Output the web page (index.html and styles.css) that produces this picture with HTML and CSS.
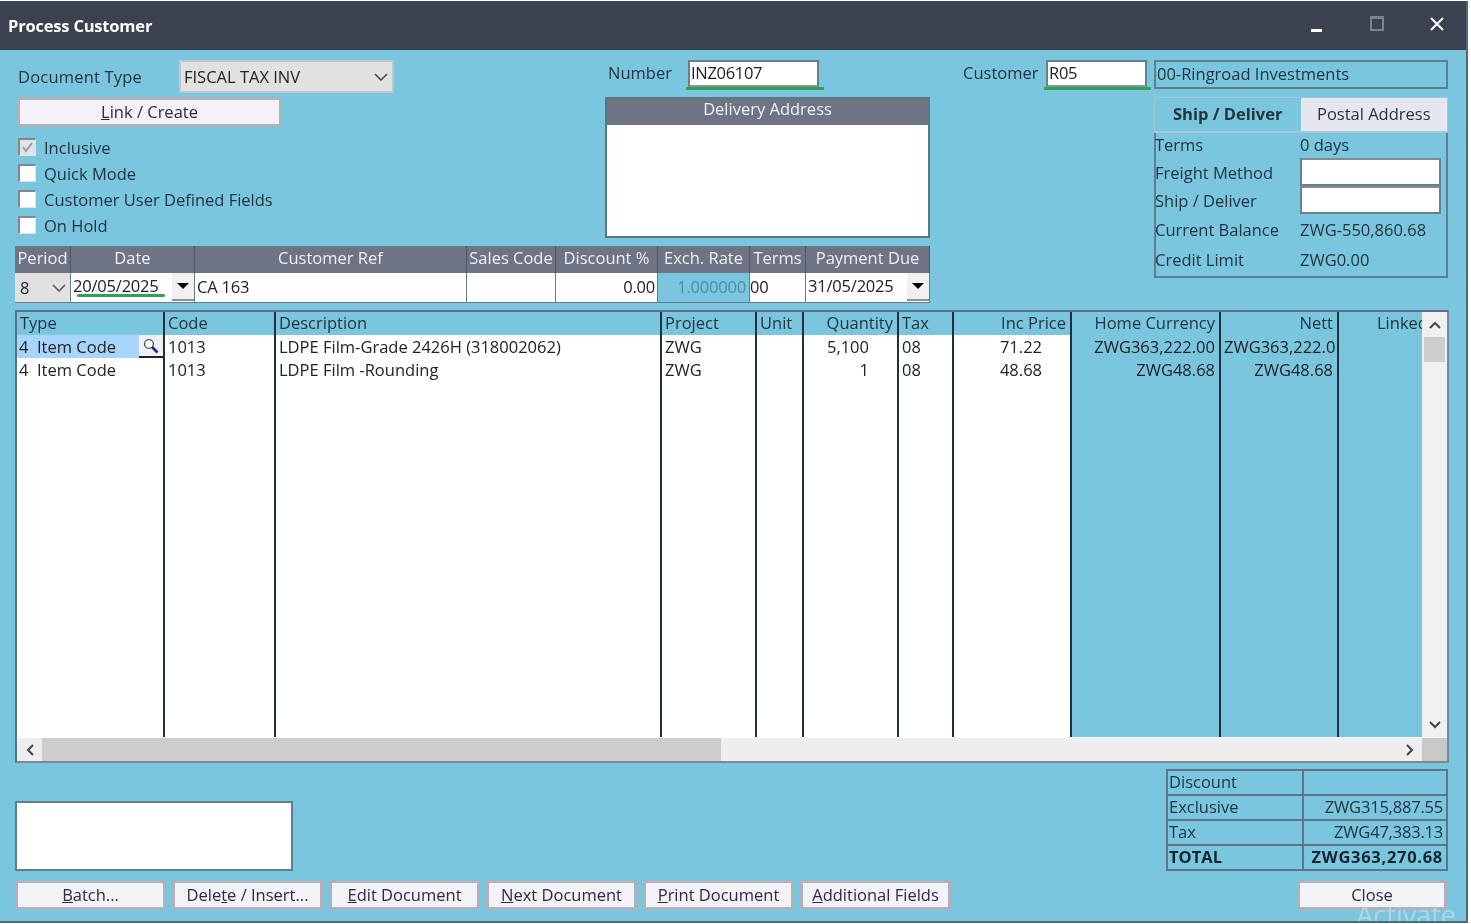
FILE: index.html
```html
<!DOCTYPE html>
<html lang="en">
<head>
<meta charset="utf-8">
<title>Process Customer</title>
<link rel="stylesheet" href="styles.css">
</head>
<body>
<div class="window">
  <header class="titlebar">
    <span class="title">Process Customer</span>
    <div class="controls">
      <span class="min"></span>
      <span class="max"></span>
      <svg class="close-x" width="16" height="16" viewBox="0 0 16 16"><path d="M2 2 L14 14 M14 2 L2 14" stroke="#fff" stroke-width="2" fill="none"/></svg>
    </div>
  </header>

  <main class="content">
    <section class="top">
      <div class="top-main">
        <div class="upper">
          <div class="left-col">
            <div class="doc-row">
              <label class="doc-label">Document Type</label>
              <div class="select"><span>FISCAL TAX INV</span>
                <svg class="chev" width="14" height="8" viewBox="0 0 14 8"><path d="M1 1 L7 7 L13 1" stroke="#444" stroke-width="1.5" fill="none"/></svg>
              </div>
            </div>
            <button class="btn link-btn"><u>L</u>ink / Create</button>
            <div class="checks">
              <div class="check-row"><span class="box disabled"><svg width="15" height="15" viewBox="0 0 15 15"><path d="M3 7 L6 11 L12 3" stroke="#9a9a9a" stroke-width="2" fill="none"/></svg></span>Inclusive</div>
              <div class="check-row"><span class="box"></span>Quick Mode</div>
              <div class="check-row"><span class="box"></span>Customer User Defined Fields</div>
              <div class="check-row"><span class="box"></span>On Hold</div>
            </div>
          </div>
          <div class="mid-col">
            <div class="num-row">
              <label class="num-label">Number</label>
              <div class="field-wrap"><div class="field num-field">INZ06107</div></div>
            </div>
            <div class="delivery">
              <div class="delivery-head">Delivery Address</div>
              <div class="delivery-body"></div>
            </div>
          </div>
        </div>
        <div class="order">
          <div class="oh">Period</div><div class="oh">Date</div><div class="oh">Customer Ref</div><div class="oh">Sales Code</div><div class="oh">Discount %</div><div class="oh">Exch. Rate</div><div class="oh">Terms</div><div class="oh">Payment Due</div>
          <div class="oc period"><span>8</span><svg width="14" height="8" viewBox="0 0 14 8"><path d="M1 1 L7 7 L13 1" stroke="#555" stroke-width="1.5" fill="none"/></svg></div>
          <div class="oc date date-main"><span>20/05/2025</span><span class="drop"><i></i></span></div>
          <div class="oc">CA 163</div>
          <div class="oc"></div>
          <div class="oc right">0.00</div>
          <div class="oc rate right">1.000000</div>
          <div class="oc flush">00</div>
          <div class="oc date due"><span>31/05/2025</span><span class="drop"><i></i></span></div>
        </div>
      </div>

      <div class="right-col">
        <div class="cust-row">
          <label class="cust-label">Customer</label>
          <div class="field-wrap"><div class="field cust-field">R05</div></div>
          <div class="cust-name">00-Ringroad Investments</div>
        </div>
        <div class="tabs">
          <div class="tab active">Ship / Deliver</div>
          <div class="tab">Postal Address</div>
        </div>
        <div class="info">
          <div class="info-row r1"><span class="k">Terms</span><span>0 days</span></div>
          <div class="info-row r2"><span class="k">Freight Method</span><span class="info-input"></span></div>
          <div class="info-row r2"><span class="k">Ship / Deliver</span><span class="info-input"></span></div>
          <div class="info-row r3"><span class="k">Current Balance</span><span>ZWG-550,860.68</span></div>
          <div class="info-row r3"><span class="k">Credit Limit</span><span>ZWG0.00</span></div>
        </div>
      </div>
    </section>

    <section class="grid">
      <div class="grid-main">
        <div class="cols">
          <div class="col w-type white">
            <div class="ch">Type</div>
            <div class="cell sel"><span class="t-no">4</span>Item Code<span class="lookup"><svg width="18" height="16" viewBox="0 0 18 16"><circle cx="7" cy="6" r="4.4" stroke="#555" stroke-width="1.4" fill="#fff"/><path d="M10 9 L15.5 14.5" stroke="#24248a" stroke-width="2.6"/></svg></span></div>
            <div class="cell"><span class="t-no">4</span>Item Code</div>
          </div>
          <div class="col w-code white">
            <div class="ch">Code</div>
            <div class="cell">1013</div>
            <div class="cell">1013</div>
          </div>
          <div class="col w-desc white">
            <div class="ch">Description</div>
            <div class="cell">LDPE Film-Grade 2426H (318002062)</div>
            <div class="cell">LDPE Film -Rounding</div>
          </div>
          <div class="col w-proj white">
            <div class="ch">Project</div>
            <div class="cell">ZWG</div>
            <div class="cell">ZWG</div>
          </div>
          <div class="col w-unit white">
            <div class="ch">Unit</div>
            <div class="cell"></div>
            <div class="cell"></div>
          </div>
          <div class="col w-qty white">
            <div class="ch right">Quantity</div>
            <div class="cell right pad-q">5,100</div>
            <div class="cell right pad-q">1</div>
          </div>
          <div class="col w-tax white">
            <div class="ch">Tax</div>
            <div class="cell">08</div>
            <div class="cell">08</div>
          </div>
          <div class="col w-price white">
            <div class="ch right">Inc Price</div>
            <div class="cell right pad-p">71.22</div>
            <div class="cell right pad-p">48.68</div>
          </div>
          <div class="col w-home">
            <div class="ch right">Home Currency</div>
            <div class="cell right">ZWG363,222.00</div>
            <div class="cell right">ZWG48.68</div>
          </div>
          <div class="col w-nett">
            <div class="ch right">Nett</div>
            <div class="cell right">ZWG363,222.0</div>
            <div class="cell right">ZWG48.68</div>
          </div>
          <div class="col w-link">
            <div class="ch link-h">Linked</div>
          </div>
        </div>
        <div class="vscroll">
          <span class="arrow"><svg width="12" height="8" viewBox="0 0 12 8"><path d="M1 7 L6 2 L11 7" stroke="#444" stroke-width="2" fill="none"/></svg></span>
          <span class="vthumb"></span>
          <span class="vfill"></span>
          <span class="arrow"><svg width="12" height="8" viewBox="0 0 12 8"><path d="M1 1 L6 6 L11 1" stroke="#444" stroke-width="2" fill="none"/></svg></span>
        </div>
      </div>
      <div class="hscroll">
        <span class="harrow"><svg width="8" height="12" viewBox="0 0 8 12"><path d="M7 1 L2 6 L7 11" stroke="#444" stroke-width="2" fill="none"/></svg></span>
        <span class="hthumb"></span>
        <span class="hfill"></span>
        <span class="harrow"><svg width="8" height="12" viewBox="0 0 8 12"><path d="M1 1 L6 6 L1 11" stroke="#444" stroke-width="2" fill="none"/></svg></span>
        <span class="corner"></span>
      </div>
    </section>

    <section class="lower">
      <div class="notes"></div>
      <table class="totals">
        <tr><td>Discount</td><td></td></tr>
        <tr><td>Exclusive</td><td>ZWG315,887.55</td></tr>
        <tr><td>Tax</td><td>ZWG47,383.13</td></tr>
        <tr class="total"><td>TOTAL</td><td>ZWG363,270.68</td></tr>
      </table>
    </section>

    <footer class="actions">
      <button class="btn act"><u>B</u>atch...</button>
      <button class="btn act">Dele<u>t</u>e / Insert...</button>
      <button class="btn act"><u>E</u>dit Document</button>
      <button class="btn act"><u>N</u>ext Document</button>
      <button class="btn act"><u>P</u>rint Document</button>
      <button class="btn act"><u>A</u>dditional Fields</button>
      <button class="btn act close">Close</button>
    </footer>
  </main>
  <div class="watermark">Activate</div>
</div>
</body>
</html>
```

FILE: styles.css
```css
* { box-sizing: border-box; }
html, body { margin: 0; padding: 0; background: #fff; }
body { width: 1471px; height: 924px; overflow: hidden; font-family: "Open Sans", "Noto Sans", sans-serif; font-size: 16.5px; color: #23343f; }

.window { position: relative; width: 1468px; height: 922px; margin-top: 1px; background: #7ac6df; border-right: 2px solid #4f6a78; border-bottom: 2px solid #4f6a78; overflow: hidden; filter: blur(0.35px); }

.titlebar { height: 49px; background: #3c4150; display: flex; align-items: center; justify-content: space-between; color: #fff; padding: 0 21px 0 8px; }
.title { font-weight: 700; font-size: 16.5px; letter-spacing: -0.2px; }
.controls { display: flex; align-items: center; gap: 0; height: 100%; }
.min { width: 11px; height: 3px; background: #fff; margin: 9px 48px 0 0; }
.max { width: 14px; height: 15px; border: 2px solid #7c8290; border-top-width: 3px; margin: 0 45px 4px 0; }
.close-x { margin-bottom: 3px; }

.content { padding: 0 18px 0 15px; }

.top { display: flex; height: 260px; padding-top: 10px; }
.top-main { width: 915px; }
.upper { display: flex; height: 186px; }
.left-col { width: 590px; }
.doc-row { display: flex; align-items: center; height: 33px; padding-left: 3px; line-height: 30px; }
.doc-label { width: 161px; letter-spacing: 0.2px; }
.select { width: 215px; height: 33px; background: #e1e1e1; border: 2px solid #c2c6cc; display: flex; align-items: center; justify-content: space-between; padding: 0 4px 0 3px; color: #222; }
.btn { font: inherit; color: #2b2b40; background: #f2f2f7; border: 3px solid #aeb2bc; padding: 0; white-space: nowrap; }
.link-btn { display: block; width: 265px; height: 30px; margin: 4px 0 0 2px; line-height: 22px; }
.checks { margin: 7px 0 0 3px; }
.check-row { display: flex; align-items: center; height: 26px; gap: 8px; }
.box { width: 18px; height: 18px; background: #fff; border-top: 2px solid #7d8a93; border-left: 2px solid #7d8a93; border-right: 1px solid #d8e6ec; border-bottom: 1px solid #d8e6ec; display: block; }
.box.disabled { background: #dfe4e8; }
.box svg { display: block; }

.mid-col { width: 325px; }
.num-row { display: flex; height: 37px; padding-left: 3px; }
.num-label { width: 78px; height: 27px; line-height: 25px; }
.field-wrap { border-bottom: 3px solid #2fa24f; height: 30px; padding: 0 5px 0 2px; }
.field { height: 27px; background: #fff; border: 2px solid #66808f; border-bottom: 2px solid #8a949c; padding-left: 1px; line-height: 22px; color: #222; letter-spacing: -0.3px; }
.num-field { width: 131px; }
.delivery { height: 141px; border: 2px solid #5f7583; display: flex; flex-direction: column; }
.delivery-head { height: 26px; background: #6f7484; color: #f0f1f4; text-align: center; line-height: 20px; }
.delivery-body { flex: 1; background: #fff; }

.order { display: grid; grid-template-columns: 56px 124px 272px 89px 102px 92px 56px 124px; grid-template-rows: 27px 29px; border-bottom: 2px solid #6a7a86; height: 57px; }
.oh { background: #6f7484; color: #eef0f4; text-align: center; line-height: 24px; border-right: 1px solid #4e5564; white-space: nowrap; overflow: hidden; }
.oc { background: #fff; border-right: 1px solid #6a7a86; line-height: 28px; padding-left: 2px; color: #222; white-space: nowrap; overflow: hidden; letter-spacing: -0.2px; }
.oc.flush { padding-left: 0; }
.oc.right { text-align: right; padding-right: 2px; }
.oc.period { background: #e1e1e1; display: flex; align-items: center; justify-content: space-between; padding: 0 4px 0 5px; }
.oc.rate { background: #7ac6df; color: #4f8ea5; padding-right: 3px; }
.oc.date { display: flex; justify-content: space-between; line-height: 26px; padding-right: 0; position: relative; }
.date-main::after { content: ""; position: absolute; left: 6px; bottom: 5px; width: 88px; height: 3px; background: #2fa24f; border-radius: 2px; }
.drop { width: 22px; height: 28px; background: #f0f0f0; border-bottom: 2px solid #8e8e8e; display: flex; align-items: center; justify-content: center; }
.drop i { display: block; width: 0; height: 0; border-left: 6px solid transparent; border-right: 6px solid transparent; border-top: 6px solid #000; }

.right-col { margin-left: 33px; width: 485px; }
.cust-row { display: flex; height: 37px; }
.cust-label { width: 81px; height: 27px; line-height: 25px; }
.cust-row .field-wrap { padding-right: 4px; width: 107px; }
.cust-field { width: 101px; }
.cust-name { margin-left: 3px; width: 294px; height: 29px; border: 2px solid #5f7f8f; line-height: 23px; padding-left: 1px; }
.tabs { display: flex; margin-left: 191px; width: 294px; height: 36px; border: 1px solid #a6c9d6; border-bottom: 2px solid #a6c9d6; }
.tab { width: 147px; text-align: center; line-height: 32px; }
.tab.active { font-weight: 700; width: 146px; }
.tab:not(.active) { background: #e6e6ee; }
.info { margin-left: 191px; width: 294px; height: 145px; border: 2px solid #5f7f8f; border-top: 0; }
.info-row { display: flex; align-items: center; }
.r1 { height: 25px; padding-bottom: 2px; }
.r2 { height: 28px; }
.r3 { height: 30px; }
.k { width: 145px; margin-left: -1px; }
.info-input { width: 141px; height: 28px; background: #fff; border: 2px solid #66808f; border-top-color: #7e8b94; display: block; }

.grid { width: 1434px; height: 453px; border: 2px solid #5b7280; border-bottom-color: #7a8a94; border-right-color: #7a8a94; background: #fff; }
.grid-main { display: flex; height: 425px; }
.cols { display: flex; width: 1405px; }
.col { border-right: 2px solid #23303a; height: 100%; }
.col.white { background: linear-gradient(#7ac6df 23px, #fff 23px); }
.cols > .col:not(.white) { background: #7ac6df; }
.w-type { width: 148px; }
.w-code { width: 111px; }
.w-desc { width: 386px; }
.w-proj { width: 95px; }
.w-unit { width: 47px; }
.w-qty { width: 95px; }
.w-tax { width: 55px; }
.w-price { width: 118px; }
.w-home { width: 149px; }
.w-nett { width: 118px; }
.w-link { width: 83px; border-right: 0; overflow: hidden; }
.ch { height: 23px; line-height: 22px; padding: 0 4px 0 3px; white-space: nowrap; color: #23343f; }
.link-h { padding-left: 38px; }
.cell { height: 23px; line-height: 23px; padding: 0 4px 0 3px; white-space: nowrap; color: #222; position: relative; overflow: hidden; }
.w-type .cell { padding-left: 2px; }
.right { text-align: right; }
.pad-q { padding-right: 28px; }
.pad-p { padding-right: 28px; }
.t-no { display: inline-block; width: 18px; }
.cell.sel { background: #a8d5fb; }
.lookup { position: absolute; right: 0; top: 0; width: 24px; height: 23px; background: #eef0f4; border-bottom: 2px solid #222; display: flex; align-items: center; justify-content: center; }

.vscroll { width: 25px; background: #f0f0f0; display: flex; flex-direction: column; }
.arrow { height: 25px; display: flex; align-items: center; justify-content: center; flex: none; }
.vthumb { height: 25px; margin: 0 2px; background: #cdcdcd; flex: none; }
.vfill { flex: 1; }
.hscroll { height: 23px; margin-top: 1px; display: flex; background: #eee; }
.harrow { width: 25px; display: flex; align-items: center; justify-content: center; flex: none; }
.hthumb { width: 679px; background: #cdcdcd; flex: none; }
.hfill { flex: 1; }
.corner { width: 25px; background: #c8c8c8; flex: none; }

.lower { display: flex; justify-content: space-between; align-items: flex-end; height: 108px; }
.notes { width: 278px; height: 70px; background: #fff; border: 2px solid #5f7f8f; }
.totals { width: 282px; height: 102px; border-collapse: collapse; table-layout: fixed; }
.totals td { border: 2px solid #5f7583; padding: 0 1px 2px; height: 25px; line-height: 20px; }
.totals td:first-child { width: 136px; }
.totals td:last-child { text-align: right; padding-right: 3px; letter-spacing: -0.2px; }
.total td { font-weight: 700; color: #152530; }
.totals .total td:last-child { letter-spacing: 0.7px; }

.actions { display: flex; gap: 6px; margin-top: 9px; }
.act { width: 151px; height: 30px; line-height: 22px; }
.close { width: 150px; margin-left: auto; margin-right: 1px; }

.watermark { position: absolute; right: 10px; bottom: -12px; color: rgba(225,232,236,0.5); font-size: 27px; }
```
